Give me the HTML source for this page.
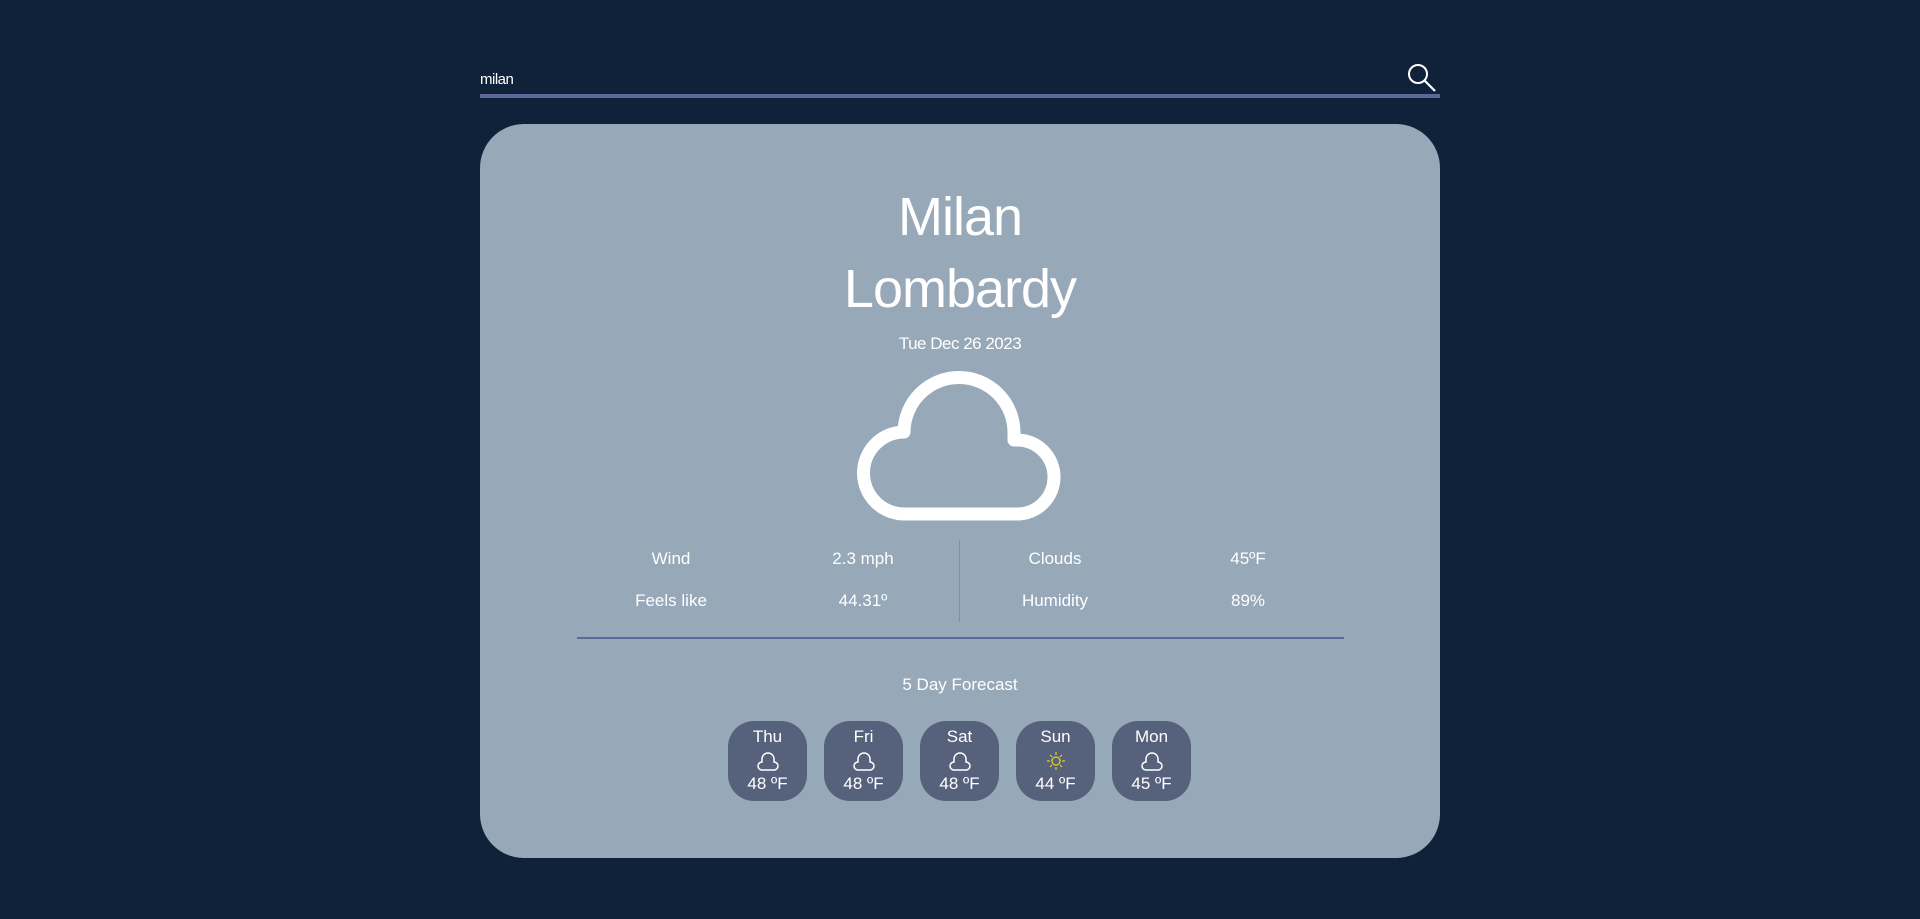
<!DOCTYPE html>
<html><head><meta charset="utf-8"><style>
*{margin:0;padding:0;box-sizing:border-box}
body{width:1920px;height:919px;background:#10223a;font-family:"Liberation Sans",sans-serif;color:#fff;position:relative;overflow:hidden}
.abs{position:absolute}
.c{text-align:center;transform:translateX(-50%)}
.card{left:480px;top:124px;width:960px;height:734px;background:#97a8b9;border-radius:44px}
.box{position:absolute;top:721px;width:79px;height:80px;background:#56627c;border-radius:26px;text-align:center;font-size:17px}
.box svg{display:block;margin:3px auto 2px}
</style></head><body>
<div class="abs" style="left:480px;top:71px;font-size:15px;letter-spacing:-0.5px">milan</div>
<svg class="abs" style="left:1406px;top:63px" width="32" height="30" viewBox="0 0 32 30"><circle cx="12" cy="11" r="9" fill="none" stroke="#fff" stroke-width="2"/><line x1="18.5" y1="17.5" x2="29" y2="28" stroke="#fff" stroke-width="2.2"/></svg>
<div class="abs" style="left:480px;top:94px;width:960px;height:4px;background:#5f6699"></div>
<div class="abs card"></div>
<div class="abs c" style="left:960px;top:186px;font-size:54px;letter-spacing:-1px">Milan</div>
<div class="abs c" style="left:960px;top:258px;font-size:54px;letter-spacing:-1px">Lombardy</div>
<div class="abs c" style="left:960px;top:334px;font-size:17px;letter-spacing:-0.5px">Tue Dec 26 2023</div>
<svg class="abs" style="left:857px;top:372px;overflow:visible" width="206" height="150" viewBox="0 0 206 150"><path d="M48 142 A41 41 0 0 1 47 60 A55 55 0 0 1 157 61 V68 H160 A37 37 0 0 1 160 142 Z" fill="none" stroke="#fff" stroke-width="13" stroke-linejoin="round"/></svg>
<div class="abs" style="left:959px;top:540px;width:1px;height:82px;background:#7f8ea8"></div>
<div class="abs c" style="left:671px;top:549px;font-size:17px">Wind</div>
<div class="abs c" style="left:863px;top:549px;font-size:17px">2.3 mph</div>
<div class="abs c" style="left:1055px;top:549px;font-size:17px">Clouds</div>
<div class="abs c" style="left:1248px;top:549px;font-size:17px">45ºF</div>
<div class="abs c" style="left:671px;top:591px;font-size:17px">Feels like</div>
<div class="abs c" style="left:863px;top:591px;font-size:17px">44.31º</div>
<div class="abs c" style="left:1055px;top:591px;font-size:17px">Humidity</div>
<div class="abs c" style="left:1248px;top:591px;font-size:17px">89%</div>
<div class="abs" style="left:577px;top:637px;width:767px;height:2px;background:#5f6699"></div>
<div class="abs c" style="left:960px;top:675px;font-size:17px">5 Day Forecast</div>
<div class="box" style="left:728px"><div style="margin-top:6px">Thu</div><svg width="26" height="22" viewBox="0 0 26 22"><path d="M7 20 H19 A4 4 0 0 0 19 12 V9 A6 6 0 0 0 7 9 V12 A4 4 0 0 0 7 20Z" fill="none" stroke="#fff" stroke-width="1.5"/></svg><div>48 ºF</div></div>
<div class="box" style="left:824px"><div style="margin-top:6px">Fri</div><svg width="26" height="22" viewBox="0 0 26 22"><path d="M7 20 H19 A4 4 0 0 0 19 12 V9 A6 6 0 0 0 7 9 V12 A4 4 0 0 0 7 20Z" fill="none" stroke="#fff" stroke-width="1.5"/></svg><div>48 ºF</div></div>
<div class="box" style="left:920px"><div style="margin-top:6px">Sat</div><svg width="26" height="22" viewBox="0 0 26 22"><path d="M7 20 H19 A4 4 0 0 0 19 12 V9 A6 6 0 0 0 7 9 V12 A4 4 0 0 0 7 20Z" fill="none" stroke="#fff" stroke-width="1.5"/></svg><div>48 ºF</div></div>
<div class="box" style="left:1016px"><div style="margin-top:6px">Sun</div><svg width="26" height="22" viewBox="0 0 26 22"><circle cx="13" cy="11" r="4" fill="none" stroke="#e8d21a" stroke-width="1.3"/><g stroke="#e8d21a" stroke-width="1.2"><line x1="13" y1="2" x2="13" y2="5"/><line x1="13" y1="17" x2="13" y2="20"/><line x1="4" y1="11" x2="7" y2="11"/><line x1="19" y1="11" x2="22" y2="11"/><line x1="7" y1="5" x2="9" y2="7"/><line x1="17" y1="15" x2="19" y2="17"/><line x1="19" y1="5" x2="17" y2="7"/><line x1="9" y1="15" x2="7" y2="17"/></g></svg><div>44 ºF</div></div>
<div class="box" style="left:1112px"><div style="margin-top:6px">Mon</div><svg width="26" height="22" viewBox="0 0 26 22"><path d="M7 20 H19 A4 4 0 0 0 19 12 V9 A6 6 0 0 0 7 9 V12 A4 4 0 0 0 7 20Z" fill="none" stroke="#fff" stroke-width="1.5"/></svg><div>45 ºF</div></div>
</body></html>
